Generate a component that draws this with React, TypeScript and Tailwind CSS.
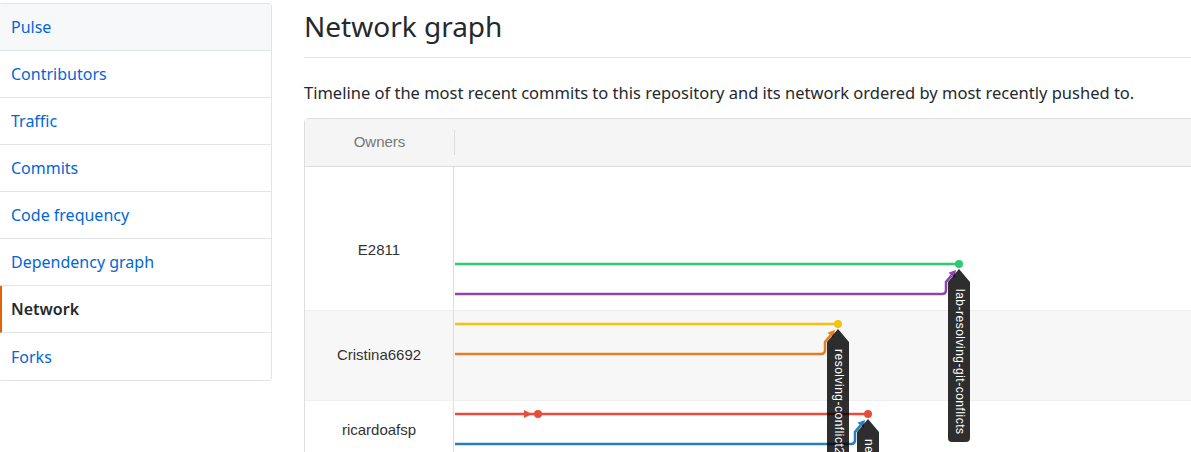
import React from 'react';

const navItems = ['Pulse', 'Contributors', 'Traffic', 'Commits', 'Code frequency', 'Dependency graph', 'Network', 'Forks'];

const C = {
  green: '#2ecc71',
  purple: '#8e44ad',
  yellow: '#f1c40f',
  orange: '#e67e22',
  red: '#e74c3c',
  blue: '#2980b9',
};

// merge line: horizontal from the left, bends up into the dot of the other branch
const Merge = ({ dotX, fromY, toY, color }: { dotX: number; fromY: number; toY: number; color: string }) => {
  const bx = dotX - 13;
  const tipX = dotX - 3;
  const tipY = toY + 6;
  const sx = bx;
  const sy = toY + 18;
  const len = Math.hypot(tipX - sx, tipY - sy);
  const ux = (tipX - sx) / len;
  const uy = (tipY - sy) / len;
  const baseX = tipX - ux * 7;
  const baseY = tipY - uy * 7;
  const px = -uy * 4;
  const py = ux * 4;
  return (
    <g>
      <path d={`M0 ${fromY} H${bx - 4} Q${bx} ${fromY} ${bx} ${fromY - 4} V${sy} L${baseX} ${baseY}`} stroke={color} strokeWidth={2.5} fill="none" />
      <polygon points={`${tipX},${tipY} ${baseX + px},${baseY + py} ${baseX - px},${baseY - py}`} fill={color} />
    </g>
  );
};

const Label = ({ x, y, text, len }: { x: number; y: number; text: string; len: number }) => {
  const top = y + 5;
  const shoulder = y + 18;
  const bottom = shoulder + len;
  return (
    <g>
      <path
        d={`M${x} ${top} L${x + 11} ${shoulder} V${bottom - 4} Q${x + 11} ${bottom} ${x + 7} ${bottom} H${x - 7} Q${x - 11} ${bottom} ${x - 11} ${bottom - 4} V${shoulder} Z`}
        fill="rgba(0,0,0,0.82)"
      />
      <text
        x={x}
        y={shoulder + 7}
        transform={`rotate(90 ${x} ${shoulder + 7})`}
        fill="#fff"
        fontSize={12}
        letterSpacing={0.5}
        dominantBaseline="middle"
        style={{ fontFamily: '"Liberation Sans", Arial, sans-serif' }}
      >
        {text}
      </text>
    </g>
  );
};

const Graph = () => (
  <svg className="absolute left-[150px] top-0" width={820} height={300}>
    <line x1={0} y1={97} x2={504} y2={97} stroke={C.green} strokeWidth={2.5} />
    <circle cx={504} cy={97} r={4} fill={C.green} />
    <Merge dotX={504} fromY={127} toY={97} color={C.purple} />

    <line x1={0} y1={157} x2={383} y2={157} stroke={C.yellow} strokeWidth={2.5} />
    <circle cx={383} cy={157} r={4} fill={C.yellow} />
    <Merge dotX={383} fromY={187} toY={157} color={C.orange} />

    <line x1={0} y1={247} x2={413} y2={247} stroke={C.red} strokeWidth={2.5} />
    <polygon points="77,247 69,243 69,251" fill={C.red} />
    <circle cx={83} cy={247} r={4} fill={C.red} />
    <circle cx={413} cy={247} r={4} fill={C.red} />
    <Merge dotX={413} fromY={277} toY={247} color={C.blue} />

    <Label x={383} y={157} text="resolving-conflict2" len={200} />
    <Label x={413} y={247} text="new-branch" len={120} />
    <Label x={504} y={97} text="lab-resolving-git-conflicts" len={160} />
  </svg>
);

export default function App() {
  return (
    <div className="flex w-[1191px] h-[452px] overflow-hidden bg-white" style={{ fontFamily: '"Noto Sans", "Open Sans", sans-serif' }}>
      <div className="w-[272px] shrink-0 pt-[3px]">
        <nav className="border border-[#e1e4e8] rounded-[3px] overflow-hidden -ml-px">
          {navItems.map((item, i) => {
            const selected = item === 'Network';
            return (
              <div
                key={item}
                className={`h-[47px] flex items-center text-[16px] ${i < navItems.length - 1 ? 'border-b border-[#e1e4e8]' : ''} ${i === 0 ? 'bg-[#f6f8fa]' : ''} ${selected ? 'font-semibold text-[#24292e] border-l-2 border-l-[#e36209] pl-[9px]' : 'text-[#0366d6] pl-[11px]'}`}
              >
                {item}
              </div>
            );
          })}
        </nav>
      </div>
      <div className="ml-[32px] w-[1000px] shrink-0">
        <div className="border-b border-[#e1e4e8] pt-[6px] pb-[11px]">
          <h2 className="text-[28px] leading-[40px] font-normal text-[#24292e]">Network graph</h2>
        </div>
        <p className="mt-[23px] text-[16.5px] leading-[24px] text-[#24292e]">
          Timeline of the most recent commits to this repository and its network ordered by most recently pushed to.
        </p>
        <div className="mt-[13px] w-[960px] border border-[#ddd] rounded-tl-[4px]" style={{ fontFamily: '"Liberation Sans", Arial, sans-serif' }}>
          <div className="h-[48px] flex items-center bg-[#f5f5f5] border-b border-[#ddd]">
            <div className="w-[149px] text-center text-[15px] text-[#777]">Owners</div>
            <div className="w-px h-[25px] bg-[#ddd]" />
          </div>
          <div className="relative">
            <div className="flex h-[144px] border-b border-[#eee]">
              <div className="w-[149px] border-r border-[#ddd] text-center text-[15px] text-[#333] pt-[72px]">E2811</div>
            </div>
            <div className="flex h-[90px] border-b border-[#eee] bg-[#f7f7f7]">
              <div className="w-[149px] border-r border-[#ddd] text-center text-[15px] text-[#333] flex items-center justify-center">Cristina6692</div>
            </div>
            <div className="flex h-[90px]">
              <div className="w-[149px] border-r border-[#ddd] text-center text-[15px] leading-[20px] text-[#333] pt-[19px]">ricardoafsp</div>
            </div>
            <Graph />
          </div>
        </div>
      </div>
    </div>
  );
}
